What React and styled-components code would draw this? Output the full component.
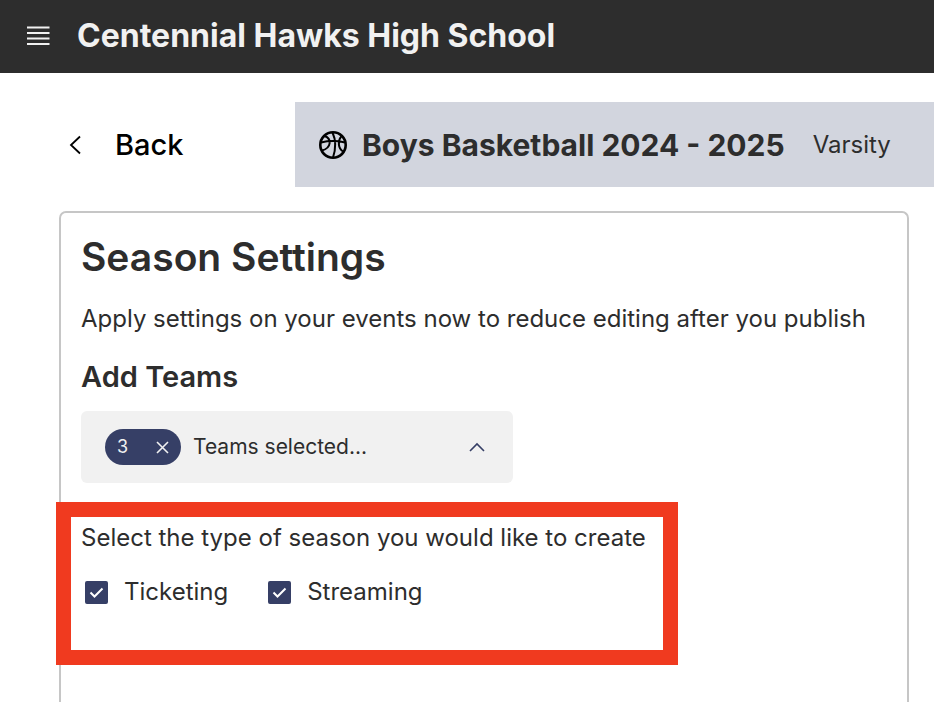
import React, { useState } from "react";
import styled, { createGlobalStyle } from "styled-components";

const GlobalStyle = createGlobalStyle`
  *, *::before, *::after { box-sizing: border-box; }
  body {
    margin: 0;
    background: #ffffff;
    color: #2d2d2d;
    font-family: Inter, "Liberation Sans", sans-serif;
  }
  h1, h2, h3, p { margin: 0; }
  button, input { font: inherit; }
`;

const Page = styled.div`
  min-height: 100vh;
  display: flex;
  flex-direction: column;
`;

const AppBar = styled.header`
  display: flex;
  align-items: center;
  gap: 27px;
  height: 73px;
  padding: 0 26px 2px;
  background: #2d2d2d;
  color: #f1f1f1;
`;

const IconButton = styled.button`
  display: flex;
  padding: 0;
  border: 0;
  background: none;
  color: inherit;
  cursor: pointer;
`;

const SchoolName = styled.h1`
  font-size: 32px;
  line-height: 40px;
  font-weight: 700;
`;

const SeasonBar = styled.div`
  display: flex;
  align-items: stretch;
  margin: 29px 0 24px;
`;

const BackLink = styled.a`
  display: flex;
  align-items: center;
  gap: 33px;
  flex: 0 0 295px;
  padding-left: 69px;
  color: #000000;
  font-size: 29px;
  line-height: 36px;
  font-weight: 500;
  text-decoration: none;
`;

const SeasonBanner = styled.div`
  flex: 1;
  display: flex;
  align-items: center;
  height: 85px;
  padding: 0 24px;
  background: #d2d5de;
`;

const SeasonName = styled.h2`
  margin: 0 28px 0 15px;
  font-size: 30px;
  line-height: 36px;
  font-weight: 700;
  white-space: nowrap;
`;

const Level = styled.span`
  font-size: 24px;
  line-height: 32px;
`;

const Card = styled.main`
  flex: 1;
  display: flex;
  flex-direction: column;
  align-items: flex-start;
  margin: 0 25px 0 59px;
  padding: 19px 20px 0;
  border: 2px solid #c6c6c6;
  border-bottom: 0;
  border-radius: 7px 7px 0 0;
`;

const CardTitle = styled.h2`
  font-size: 39px;
  line-height: 50px;
  font-weight: 600;
`;

const BodyText = styled.p`
  margin-top: 21px;
  font-size: 24px;
  line-height: 32px;
`;

const SectionTitle = styled.h3`
  margin-top: 24px;
  font-size: 29px;
  line-height: 36px;
  font-weight: 600;
`;

const TeamPicker = styled.div`
  display: flex;
  align-items: center;
  gap: 12px;
  width: 432px;
  max-width: 100%;
  height: 72px;
  margin-top: 16px;
  padding: 0 24px;
  border-radius: 6px;
  background: #f1f1f1;
  font-size: 21px;
  line-height: 32px;
`;

const CountChip = styled.span`
  display: flex;
  align-items: center;
  justify-content: space-between;
  width: 76px;
  height: 36px;
  padding: 0 12px;
  border-radius: 18px;
  background: #363f66;
  color: #f1f1f1;
  font-size: 18px;
`;

const PickerToggle = styled(IconButton)`
  flex: 1;
  align-items: center;
  justify-content: space-between;
  padding-right: 4px;
  > svg { color: #363f66; }
`;

const HighlightedSection = styled.section`
  position: relative;
  margin-top: 39px;
`;

const Highlight = styled.div`
  position: absolute;
  inset: -20px -32px -57px -25px;
  border: 15px solid #f03a1f;
  pointer-events: none;
`;

const SeasonTypes = styled.fieldset`
  min-width: 0;
  margin: 0;
  padding: 0;
  border: 0;
  font-size: 24px;
  line-height: 32px;
`;

const Legend = styled.legend`
  padding: 0;
`;

const Options = styled.div`
  display: flex;
  gap: 40px;
  padding: 22px 0 0 4px;
`;

const Option = styled.label`
  display: flex;
  align-items: center;
  gap: 16px;
  cursor: pointer;
`;

const CheckCell = styled.span`
  display: grid;
  place-items: center;
  > * { grid-area: 1 / 1; }
  > svg { pointer-events: none; }
`;

const CheckInput = styled.input`
  appearance: none;
  width: 23px;
  height: 23px;
  margin: 0;
  border: 2px solid #363f66;
  border-radius: 2px;
  cursor: pointer;
  &:checked { background: #363f66; }
`;

const Stroke = ({ w, h, d, width = 2 }) => (
  <svg width={w} height={h} viewBox={`0 0 ${w} ${h}`} fill="none" stroke="currentColor" strokeWidth={width} aria-hidden="true">
    <path d={d} />
  </svg>
);

const Basketball = () => (
  <svg width="28" height="28" viewBox="0 0 28 28" fill="none" stroke="#000" strokeWidth="2" aria-hidden="true">
    <circle cx="14" cy="14" r="12.7" strokeWidth="2.6" />
    <path d="M2 11.500C9 9.800 19 9.800 26 11.500M13.500 1.500C17 9 16.500 19 14 26.500M5.500 5C13 7.500 12.500 17 3 19.500M22.500 5C18.500 10 19 17 24 20.500" />
  </svg>
);

function CheckOption({ label }) {
  const [checked, setChecked] = useState(true);
  return (
    <Option>
      <CheckCell>
        <CheckInput type="checkbox" checked={checked} onChange={() => setChecked(!checked)} />
        {checked && (
          <svg width="23" height="23" viewBox="0 0 23 23" fill="none" stroke="#fff" strokeWidth="2" aria-hidden="true">
            <path d="M5.500 11.500L9.500 15.500L17.500 7.500" />
          </svg>
        )}
      </CheckCell>
      {label}
    </Option>
  );
}

export default function App() {
  return (
    <Page>
      <GlobalStyle />
      <AppBar>
        <IconButton type="button" aria-label="Open menu">
          <Stroke w={24} h={20} d="M1 1.500H23.500M1 7H23.500M1 12.500H23.500M1 18H23.500" width={1.8} />
        </IconButton>
        <SchoolName>Centennial Hawks High School</SchoolName>
      </AppBar>
      <SeasonBar>
        <BackLink href="#back">
          <Stroke w={13} h={20} d="M11 1.500L2 10L11 18.500" width={1.8} />
          Back
        </BackLink>
        <SeasonBanner>
          <Basketball />
          <SeasonName>Boys Basketball 2024 - 2025</SeasonName>
          <Level>Varsity</Level>
        </SeasonBanner>
      </SeasonBar>
      <Card>
        <CardTitle>Season Settings</CardTitle>
        <BodyText>Apply settings on your events now to reduce editing after you publish</BodyText>
        <SectionTitle>Add Teams</SectionTitle>
        <TeamPicker>
          <CountChip>
            3
            <IconButton type="button" aria-label="Clear selected teams">
              <Stroke w={13} h={13} d="M1 1L12 12M12 1L1 12" width={1.6} />
            </IconButton>
          </CountChip>
          <PickerToggle type="button" aria-expanded="true">
            Teams selected...
            <Stroke w={16} h={10} d="M1 9L8 2L15 9" width={1.6} />
          </PickerToggle>
        </TeamPicker>
        <HighlightedSection>
          <SeasonTypes>
            <Legend>Select the type of season you would like to create</Legend>
            <Options>
              <CheckOption label="Ticketing" />
              <CheckOption label="Streaming" />
            </Options>
          </SeasonTypes>
          <Highlight />
        </HighlightedSection>
      </Card>
    </Page>
  );
}
